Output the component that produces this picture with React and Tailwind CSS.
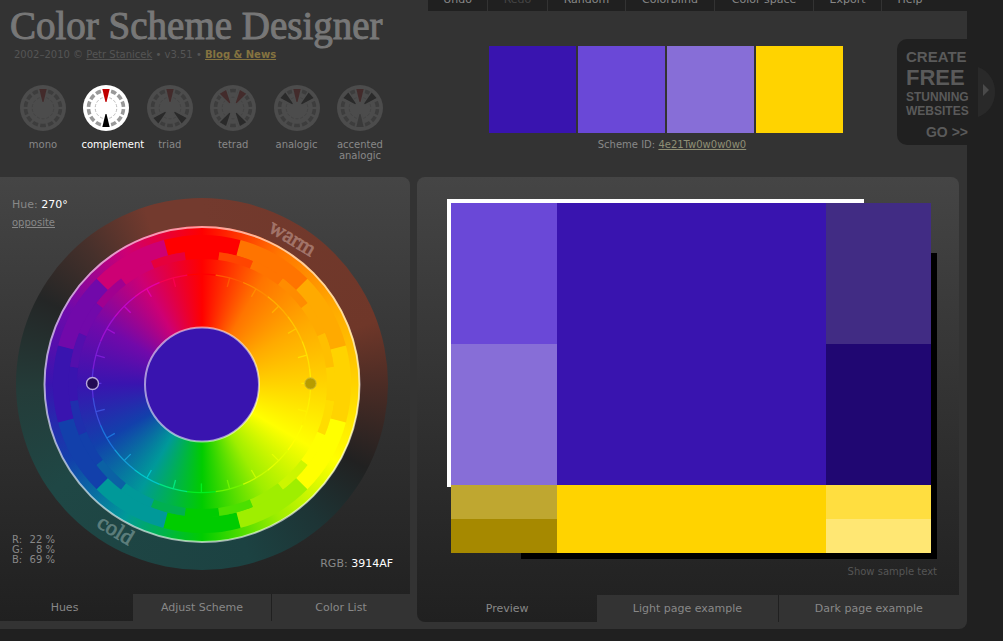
import React from "react";

const HUES = [
  "#ff0000", "#ff7400", "#ffaa00", "#ffd300", "#ffff00", "#9fee00",
  "#00cc00", "#009999", "#1240ab", "#3914af", "#7109aa", "#cd0074",
];
const MIDS = [
  "#ff4500", "#ff8c00", "#ffbf00", "#ffdc00", "#ccf600", "#4be000",
  "#00b050", "#0b61a4", "#1f2fad", "#530fad", "#a00090", "#e6003c",
];
const DIAL = [
  "#ff0000", "#ff5a00", "#ff8c00", "#ffb000", "#ffc800", "#ffe000", "#ffea00", "#fff000",
  "#ffff00", "#e4ff00", "#c8fc00", "#70f400", "#00f020", "#00e880", "#00c8cc", "#14a0d8",
  "#1c74dc", "#3c50dc", "#5830dc", "#7c1cd4", "#9c10d0", "#c008c8", "#e400a8", "#f80050",
];

const point = (c, r, deg) => {
  const a = ((deg - 90) * Math.PI) / 180;
  return `${(c + r * Math.cos(a)).toFixed(2)} ${(c + r * Math.sin(a)).toFixed(2)}`;
};

const sector = (c, r1, r2, from, to) =>
  `M${point(c, r1, from)} L${point(c, r2, from)} A${r2} ${r2} 0 0 1 ${point(c, r2, to)} L${point(c, r1, to)} A${r1} ${r1} 0 0 0 ${point(c, r1, from)}Z`;

const arc = (c, r, from, to) => `M${point(c, r, from)} A${r} ${r} 0 0 1 ${point(c, r, to)}`;

const DASHES = Array.from({ length: 14 }, (_, i) => (i * 360) / 14);

const MODES = [
  { name: "mono", wedges: [[0, "red"]] },
  { name: "complement", active: true, wedges: [[0, "red"], [180, "dark"]] },
  { name: "triad", wedges: [[0, "red"], [132, "dark"], [228, "dark"]] },
  { name: "tetrad", wedges: [[-32, "red"], [32, "red"], [148, "dark"], [212, "dark"]] },
  { name: "analogic", wedges: [[0, "red"], [-48, "dark"], [48, "dark"]] },
  { name: "accented analogic", wedges: [[0, "red"], [-48, "dark"], [48, "dark"], [180, "faint"]] },
];

function ModeIcon({ wedges, active }) {
  const fill = active
    ? { red: "#c00000", dark: "#000000", faint: "#000000" }
    : { red: "#432b2b", dark: "#2a2a2a", faint: "#3a3a3a" };
  const disc = active ? "#ffffff" : "#4c4c4c";
  return (
    <svg viewBox="0 0 46 46" className="size-[46px]" aria-hidden="true">
      <circle cx="23" cy="23" r="23" fill={disc} />
      {DASHES.map((a) => (
        <g key={a} fill="none">
          <path d={arc(23, 17.5, a - 9, a + 9)} stroke={active ? "#999999" : "#3d3d3d"} strokeWidth="3.6" />
          <path d={arc(23, 10.8, a - 8, a + 8)} stroke={active ? "#bbbbbb" : "#434343"} strokeWidth="1" />
        </g>
      ))}
      {wedges.map(([angle, tone]) => (
        <g key={angle} transform={`rotate(${angle} 23 23)`}>
          <path d="M17.5 3H28.5L24.5 18H21.5Z" fill={disc} />
          <path d="M19.3 4H26.7L23.5 17H22.5Z" fill={fill[tone]} />
        </g>
      ))}
    </svg>
  );
}

function Wheel() {
  return (
    <div className="grid size-[372px] place-items-center">
      <div className="size-[372px] rounded-full [grid-area:1/1] bg-[conic-gradient(#733a2e_0deg,#6f3729_70deg,#4c2c25_90deg,#212121_117deg,#1d3435_140deg,#1c4242_165deg,#1f4745_235deg,#243c39_268deg,#242626_298deg,#46302b_320deg,#733a2e_342deg,#733a2e_360deg)]" />
      <div className="size-[316px] rounded-full [grid-area:1/1] bg-[conic-gradient(#ff0000,#ff7400,#ffaa00,#ffd300,#ffff00,#9fee00,#00cc00,#009999,#1240ab,#3914af,#7109aa,#cd0074,#ff0000)]" />
      <svg viewBox="0 0 372 372" className="size-[372px] [grid-area:1/1]" role="img" aria-label="Hue wheel">
        {HUES.map((c, i) => (
          <path key={c} d={sector(186, 133, 149, i * 30 - 15, i * 30 + 15.2)} fill={c} />
        ))}
        {HUES.map((c, i) => (
          <path key={c} d={sector(186, 125, 133.5, i * 30 - 7.5, i * 30 + 7.5)} fill={c} />
        ))}
        {MIDS.map((c, i) => (
          <path key={c} d={sector(186, 125, 133, i * 30 + 7.5, i * 30 + 22.5)} fill={c} />
        ))}
        {DIAL.map((c, i) => (
          <g key={i} stroke={c} strokeWidth="1.3" fill="none">
            <path d={arc(185.4, 109.2, i * 15 - 7.5, i * 15 + 7.6)} />
            <path d={`M${point(185.4, 100, i * 15)} L${point(185.4, 109.2, i * 15)}`} />
          </g>
        ))}
        <circle cx="186" cy="186.5" r="157.5" fill="none" stroke="#ffffff" strokeOpacity="0.6" strokeWidth="2" />
        <circle cx="186" cy="186.5" r="57" fill="#3914af" />
        <circle cx="186" cy="186.5" r="57" fill="none" stroke="#ffffff" strokeOpacity="0.55" strokeWidth="2" />
        <circle cx="76.5" cy="185.5" r="6" fill="#220a54" stroke="#b8a8dc" strokeWidth="1.4" />
        <circle cx="294.5" cy="185.5" r="5.6" fill="#b79c00" stroke="#c9b430" strokeWidth="1" />
        <g fontFamily="'Liberation Serif', serif" fontSize="22" textAnchor="middle" strokeWidth="0.8">
          <text x="273" y="46" transform="rotate(31 273 46)" fill="#a27469" stroke="#a27469">warm</text>
          <text x="96" y="338" transform="rotate(31 96 338)" fill="#5d7e7c" stroke="#5d7e7c">cold</text>
        </g>
      </svg>
    </div>
  );
}

const SWATCHES = ["bg-[#3914af]", "bg-[#6a48d7]", "bg-[#876ed7]", "bg-[#ffd300]"];

const MENU = [
  ["Undo", "w-[60px]"],
  ["Redo", "w-[60px] text-[#444]"],
  ["Random", "w-[78px]"],
  ["Colorblind", "w-[89px]"],
  ["Color space", "w-[99px]"],
  ["Export", "w-[68px]"],
  ["Help", "w-[56px]"],
];

function Tab({ children, active, divided, className = "" }) {
  return (
    <button
      type="button"
      role="tab"
      aria-selected={!!active}
      className={`h-[27px] flex-1 pt-[2px] text-[11px] ${active ? "" : "bg-[#333]"} ${divided ? "border-l border-[#202020]" : ""} ${className}`}
    >
      {children}
    </button>
  );
}

function Banner() {
  return (
    <a href="#create" className="absolute right-0 top-[39px] flex h-[106px] w-[106px] items-center rounded-l-[10px] bg-[#202020] font-['Liberation_Sans',Arial,sans-serif] font-bold text-[#5a5a5a]">
      <span className="flex w-[81px] flex-col pl-[9px] pt-1">
        <span className="text-[15px] leading-[18px]">CREATE</span>
        <span className="text-[22px] leading-[24px]">FREE</span>
        <span className="text-[12px] leading-[14px]">STUNNING</span>
        <span className="text-[12px] leading-[14px]">WEBSITES</span>
        <span className="pr-[10px] pt-[5px] text-right text-[14px] leading-[18px] whitespace-nowrap">GO &gt;&gt;</span>
      </span>
      <svg viewBox="0 0 17 50" className="h-[50px] w-[17px]" aria-hidden="true">
        <path d="M0 0C11 4 17 14 17 25S11 46 0 50Z" fill="#292929" />
        <path d="M5 17L11 23L5 29Z" fill="#4a4a4a" />
      </svg>
    </a>
  );
}

export default function App() {
  return (
    <div className="relative min-h-screen bg-[#202020] pr-9 font-['DejaVu_Sans',Verdana,sans-serif] text-[#888]">
      <main className="rounded-br-[8px] bg-[#333] pb-[7px]">
        <header className="grid h-[177px] grid-cols-[428px_minmax(0,1fr)]">
          <div>
            <h1 className="pl-[10px] pt-1 font-['Liberation_Serif',serif] text-[39px] leading-[44px] whitespace-nowrap text-[#777] [-webkit-text-stroke:1px_#777]">
              Color Scheme Designer
            </h1>
            <p className="pl-[14px] text-[10px] leading-[14px] text-[#555]">
              2002–2010 © <a href="#author" className="underline">Petr Stanicek</a> • v3.51 •{" "}
              <a href="#blog" className="font-bold text-[#857340] underline">Blog &amp; News</a>
            </p>
            <div className="ml-[18px] mt-[23px] flex w-[367px] justify-between">
              {MODES.map((m) => (
                <button key={m.name} type="button" aria-pressed={!!m.active} className={`flex w-[50px] flex-col items-center gap-2 text-[10px] leading-[11px] ${m.active ? "text-white" : ""}`}>
                  <ModeIcon {...m} />
                  <span className={m.active ? "self-start" : ""}>{m.name}</span>
                </button>
              ))}
            </div>
          </div>
          <div>
            <nav className="flex h-[11px] items-end overflow-hidden bg-[#202020] text-[11px]">
              {MENU.map(([label, cls], i) => (
                <button key={label} type="button" className={`h-[27px] shrink-0 pt-[5px] ${i < MENU.length - 1 ? "border-r border-[#333]" : ""} ${cls}`}>
                  {label}
                </button>
              ))}
            </nav>
            <div className="ml-[61px] mt-[35px] flex w-[354px] flex-col">
              <div className="flex gap-[2px]">
                {SWATCHES.map((c) => (
                  <div key={c} className={`h-[87px] flex-1 ${c}`} />
                ))}
              </div>
              <p className="pl-3 pt-1 text-center text-[10px] leading-[15px]">
                Scheme ID: <a href="#scheme" className="text-[#8f8f75] underline">4e21Tw0w0w0w0</a>
              </p>
            </div>
          </div>
        </header>

        <div className="grid grid-cols-[410px_minmax(0,1fr)] items-start gap-[7px] pr-2">
          <section className="overflow-hidden rounded-tr-[8px] bg-linear-to-b from-[#454545] to-[#202020]">
            <div className="relative h-[417px] pl-4 pt-[21px]">
              <Wheel />
              <div className="absolute left-3 top-5 text-[11px] leading-4">
                <p>Hue: <span className="text-white">270°</span></p>
                <a href="#opposite" className="text-[10px] leading-5 underline">opposite</a>
              </div>
              <dl className="absolute bottom-[29px] left-3 grid grid-cols-[12px_31px] text-right text-[10px] leading-[10px]">
                <dt className="text-left">R:</dt><dd>22 %</dd>
                <dt className="text-left">G:</dt><dd>8 %</dd>
                <dt className="text-left">B:</dt><dd>69 %</dd>
              </dl>
              <p className="absolute bottom-[22px] right-[17px] text-[11px] leading-4">
                RGB: <span className="text-white">3914AF</span>
              </p>
            </div>
            <div role="tablist" className="flex">
              <Tab active className="max-w-[133px] pr-1">Hues</Tab>
              <Tab>Adjust Scheme</Tab>
              <Tab divided>Color List</Tab>
            </div>
          </section>

          <section className="overflow-hidden rounded-t-[8px] rounded-bl-[8px] bg-linear-to-b from-[#454545] to-[#202020]">
            <div className="flex h-[418px] flex-col pl-[30px] pr-[22px] pt-[22px]">
              <div className="relative pb-[6px] pl-1 pr-[6px] pt-1">
                <div className="absolute left-0 top-0 h-72 w-[85%] bg-white" />
                <div className="absolute bottom-0 right-0 h-[306px] w-[85%] bg-black" />
                <div className="relative grid h-[350px] grid-cols-[106fr_269fr_105fr]">
                  <div className="flex flex-col">
                    <div className="h-[141px] bg-[#6a48d7]" />
                    <div className="h-[141px] bg-[#876ed7]" />
                    <div className="h-[34px] bg-[#bfa730]" />
                    <div className="h-[34px] bg-[#a68900]" />
                  </div>
                  <div className="flex flex-col">
                    <div className="h-[282px] bg-[#3914af]" />
                    <div className="h-[68px] bg-[#ffd300]" />
                  </div>
                  <div className="flex flex-col">
                    <div className="h-[141px] bg-[#412c84]" />
                    <div className="h-[141px] bg-[#200772]" />
                    <div className="h-[34px] bg-[#ffde40]" />
                    <div className="h-[34px] bg-[#ffe773]" />
                  </div>
                </div>
              </div>
              <button type="button" className="mt-[5px] self-end text-[10px] leading-[15px] text-[#555]">Show sample text</button>
            </div>
            <div role="tablist" className="flex">
              <Tab active>Preview</Tab>
              <Tab>Light page example</Tab>
              <Tab divided>Dark page example</Tab>
            </div>
          </section>
        </div>
      </main>
      <Banner />
    </div>
  );
}
